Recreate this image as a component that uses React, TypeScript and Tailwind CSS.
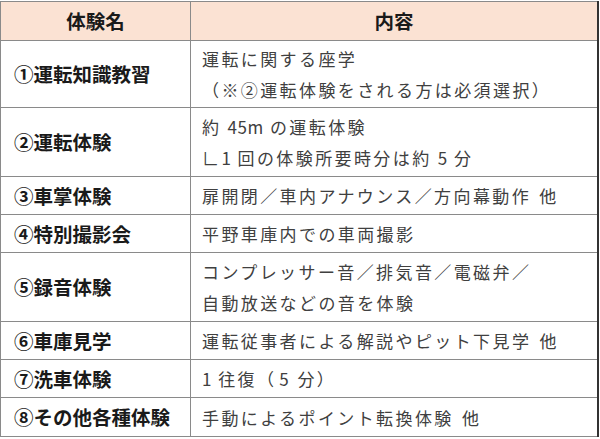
import type { ReactNode } from "react";

const hw = (s: string) => <span className="tracking-[0.5px]">{s}</span>;
const other = <span className="ml-[2px]">他</span>;

const rows: { name: string; lines: ReactNode[]; h: string }[] = [
  { name: "①運転知識教習", lines: ["運転に関する座学", "（※②運転体験をされる方は必須選択）"], h: "h-[67px]" },
  { name: "②運転体験", lines: [<>約 {hw("45m")} の運転体験</>, <>∟{hw("1")} 回の体験所要時分は約 {hw("5")} 分</>], h: "h-[69px]" },
  { name: "③車掌体験", lines: [<>扉開閉／車内アナウンス／方向幕動作 {other}</>], h: "h-[38px]" },
  { name: "④特別撮影会", lines: ["平野車庫内での車両撮影"], h: "h-[38px]" },
  { name: "⑤録音体験", lines: ["コンプレッサー音／排気音／電磁弁／", "自動放送などの音を体験"], h: "h-[69px]" },
  { name: "⑥車庫見学", lines: [<>運転従事者による解説やピット下見学 {other}</>], h: "h-[38px]" },
  { name: "⑦洗車体験", lines: [<>{hw("1")} 往復（<span className="ml-[3px]">5</span> 分）</>], h: "h-[38px]" },
  { name: "⑧その他各種体験", lines: [<>手動によるポイント転換体験 {other}</>], h: "h-[39px]" },
];

export default function App() {
  return (
    <div className="w-[600px] h-[439px] bg-white pt-px" style={{ fontFamily: '"Noto Sans CJK JP", "Noto Sans", sans-serif' }}>
      <table className="w-[599px] border-collapse table-fixed border-l border-t border-b border-l-[#8a8a8a] border-t-[#8a8a8a] border-b-[#8a8a8a] border-r-2 border-r-[#333]">
        <colgroup>
          <col className="w-[190px]" />
          <col />
        </colgroup>
        <thead>
          <tr className="h-[39px] bg-[#fbe2d3]">
            <th className="border border-[#8a8a8a] text-[19.5px] font-bold text-[#1a1a1a] text-center">体験名</th>
            <th className="border border-[#8a8a8a] border-r-2 border-r-[#333] text-[19.5px] font-bold text-[#1a1a1a] text-center">内容</th>
          </tr>
        </thead>
        <tbody>
          {rows.map((r) => (
            <tr key={r.name} className={r.h}>
              <td className="border border-[#8a8a8a] pl-[13px] text-[19.5px] font-bold text-[#1a1a1a] leading-none align-middle whitespace-nowrap">
                {r.name}
              </td>
              <td className="border border-[#8a8a8a] border-r-2 border-r-[#333] pl-[11px] text-[17px] tracking-[2.4px] text-[#404040] leading-[31px] align-middle whitespace-nowrap">
                {r.lines.map((l, i) => (
                  <div key={i}>{l}</div>
                ))}
              </td>
            </tr>
          ))}
        </tbody>
      </table>
    </div>
  );
}
